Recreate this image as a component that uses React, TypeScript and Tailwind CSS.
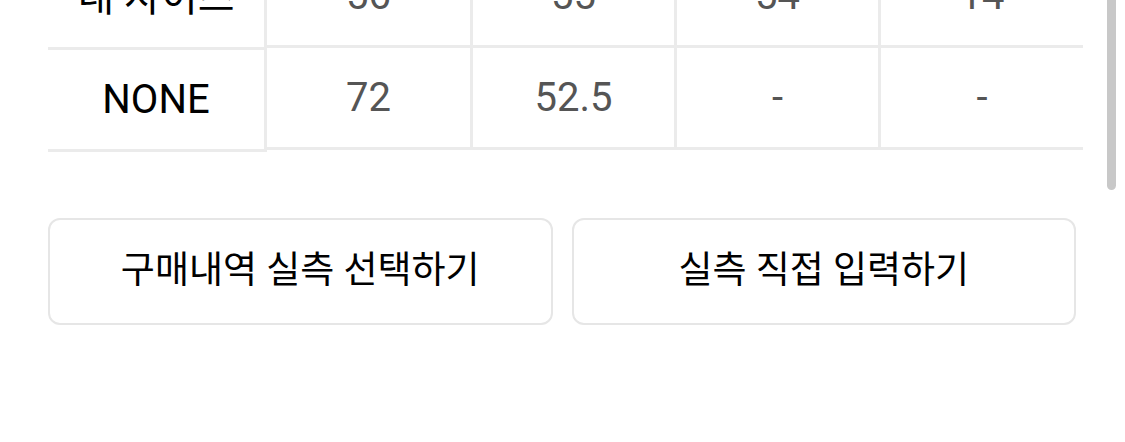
const font = { fontFamily: '"Roboto", "Noto Sans CJK KR", sans-serif' };

interface SizeRow {
  label: string;
  values: string[];
}

const rows: SizeRow[] = [
  { label: "내 사이즈", values: ["56", "55", "54", "14"] },
  { label: "NONE", values: ["72", "52.5", "-", "-"] },
];

const cellWidths = ["w-[206px] border-r-[3px]", "w-[204px] border-r-[3px]", "w-[204px] border-r-[3px]", "w-[202px]"];

export default function App() {
  return (
    <div className="relative h-[442px] w-[1125px] overflow-hidden bg-white" style={font}>
      {/* scroll thumb */}
      <div className="absolute right-[9px] top-0 h-[190px] w-[9px] rounded-b-full bg-[#c8c8c8]" />

      <div className="-mt-[54px] flex items-start pl-[48px]">
        <div className="mt-[2px] w-[219px] border-r-[3px] border-[#ebebeb]">
          {rows.map(r => (
            <div key={r.label} className="flex h-[102px] items-center justify-center border-b-[3px] border-[#ebebeb] text-[40px] text-black">
              {r.label}
            </div>
          ))}
        </div>
        <div>
          {rows.map(r => (
            <div key={r.label} className="flex">
              {r.values.map((v, i) => (
                <div
                  key={i}
                  className={`flex h-[102px] items-center justify-center border-b-[3px] border-[#ebebeb] text-[40px] text-[#555555] ${cellWidths[i]}`}
                >
                  {v}
                </div>
              ))}
            </div>
          ))}
        </div>
      </div>

      <div className="mt-[66px] grid w-[1076px] grid-cols-2 gap-[19px] pl-[48px]">
        <button className="flex h-[107px] items-center justify-center rounded-[12px] border-2 border-[#e6e6e6] bg-white pb-[2px] text-[37px] text-black">
          구매내역 실측 선택하기
        </button>
        <button className="flex h-[107px] items-center justify-center rounded-[12px] border-2 border-[#e6e6e6] bg-white pb-[2px] text-[37px] text-black">
          실측 직접 입력하기
        </button>
      </div>
    </div>
  );
}
